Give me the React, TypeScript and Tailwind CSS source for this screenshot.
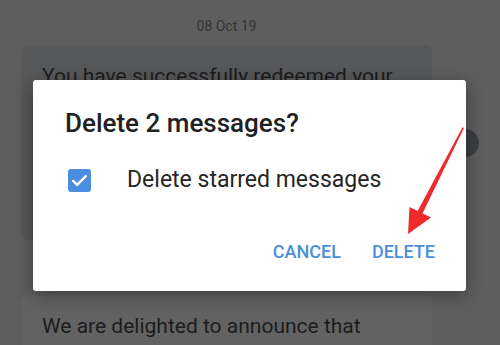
import React from "react";

export default function App() {
  return (
    <div className="relative w-[500px] h-[345px] overflow-hidden bg-[#5e5e5e] font-['Roboto',sans-serif]">
      {/* chat behind the dim overlay */}
      <div className="flex flex-col px-[21px] w-[453px]">
        <div className="pt-[18px] h-[45px] text-center text-[14px] leading-[16px] text-[#343434]">
          08 Oct 19
        </div>
        <div className="h-[195px] rounded-[6px] bg-[#57585a] px-[21px] pt-[18px]">
          <p className="text-[21px] leading-[26px] text-[#1c1c1c]">
            You have successfully redeemed your
          </p>
        </div>
        <div className="mt-[55px] h-[80px] rounded-[6px] bg-[#626262] px-[21px] pt-[18px]">
          <p className="text-[21px] leading-[26px] text-[#1c1c1c]">
            We are delighted to announce that
          </p>
        </div>
      </div>

      {/* round button peeking out behind the dialog */}
      <div className="absolute left-[451px] top-[129px] w-[28px] h-[28px] rounded-full bg-[#3b3e43]" />

      {/* dialog */}
      <div className="absolute left-[33px] top-[80px] w-[433px] h-[211px] rounded-[3px] bg-white shadow-[0_4px_18px_rgba(0,0,0,0.35)] flex flex-col">
        <h2 className="pl-[32px] pt-[28px] text-[26px] leading-[30px] font-medium text-[#212121]">
          Delete 2 messages?
        </h2>
        <div className="flex items-center pl-[35px] mt-[27px]">
          <div className="w-[23px] h-[23px] rounded-[3px] bg-[#4b8de0] flex items-center justify-center">
            <svg width="19" height="19" viewBox="0 0 24 24" fill="none" stroke="white" strokeWidth="3" strokeLinecap="round" strokeLinejoin="round">
              <path d="M4 12.5l5 5L20 6.5" />
            </svg>
          </div>
          <span className="ml-[36px] text-[23px] leading-[30px] text-[#262626]">
            Delete starred messages
          </span>
        </div>
        <div className="mt-auto mb-[28px] flex justify-end gap-[31px] pr-[31px]">
          <button className="text-[18px] leading-[22px] font-medium text-[#4a8fdb]">CANCEL</button>
          <button className="text-[18px] leading-[22px] font-medium text-[#4a8fdb]">DELETE</button>
        </div>
      </div>

      {/* red annotation arrow */}
      <svg className="absolute left-0 top-0" width="500" height="345" viewBox="0 0 500 345">
        <path d="M464 128 L462.5 127.3 L416 214 L421 216.5 Z" fill="#ee2a2a" />
        <path d="M408 234 L409.5 207 L431 217.5 Z" fill="#ee2a2a" />
      </svg>
    </div>
  );
}
